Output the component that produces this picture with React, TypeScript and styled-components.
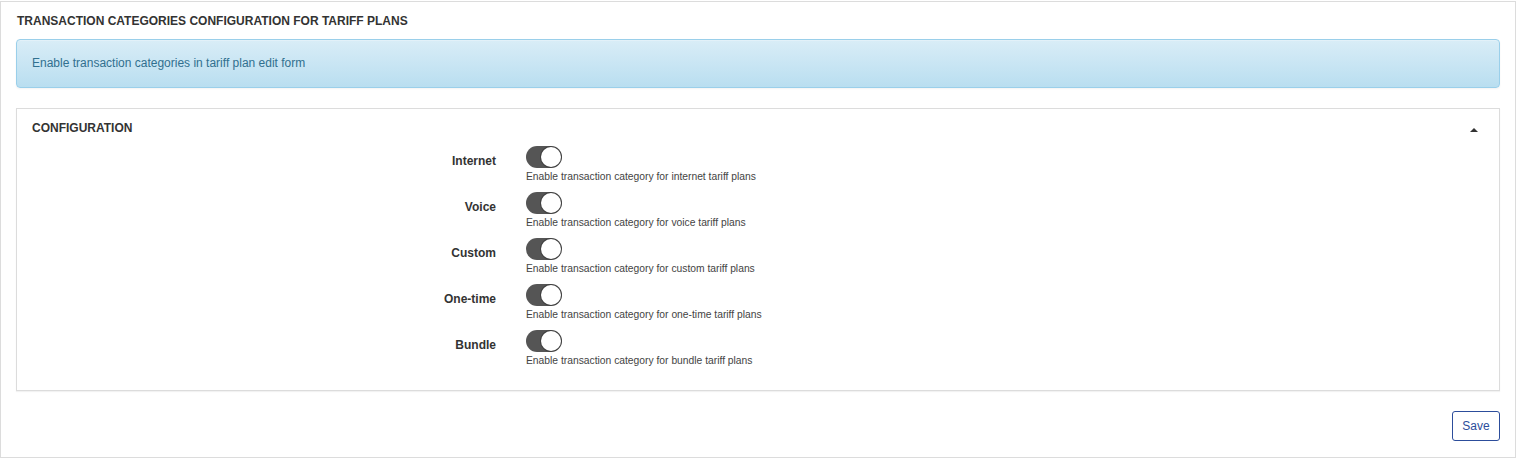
import React from "react";
import styled, { createGlobalStyle } from "styled-components";

const Global = createGlobalStyle`
  html, body { margin: 0; padding: 0; background: #fff; }
  body { font-family: "Liberation Sans", Arial, sans-serif; color: #333; font-size: 12px; }
  * { box-sizing: border-box; }
`;

const Page = styled.div`
  padding: 1px 1px 2px 0;
`;

const Outer = styled.div`
  border: 1px solid #dcdcdc;
  width: 1516px;
  height: 457px;
  padding: 0 15px;
  display: flex;
  flex-direction: column;
`;

const Title = styled.h1`
  margin: 0;
  padding: 12px 1px 0;
  height: 37px;
  font-size: 12px;
  font-weight: bold;
  text-transform: uppercase;
  color: #333;
  line-height: 14px;
`;

const Alert = styled.div`
  height: 49px;
  border: 1px solid #9acfea;
  border-radius: 4px;
  background: linear-gradient(to bottom, #d9edf7 0%, #b9def0 100%);
  box-shadow: inset 0 1px 0 rgba(255,255,255,.25), 0 1px 2px rgba(0,0,0,.05);
  color: #31708f;
  padding: 16px 15px 0;
  line-height: 14px;
  font-size: 12px;
`;

const Panel = styled.div`
  margin-top: 20px;
  border: 1px solid #dcdcdc;
  box-shadow: 0 1px 1px rgba(0,0,0,.05);
  height: 283px;
`;

const PanelHeader = styled.div`
  display: flex;
  justify-content: space-between;
  align-items: center;
  padding: 0 15px 0;
  height: 37px;
  font-weight: bold;
  line-height: 14px;
  color: #333;
`;

const Caret = styled.span`
  width: 0;
  height: 0;
  border-left: 4px solid transparent;
  border-right: 4px solid transparent;
  border-bottom: 4px solid #333;
  margin-right: 6px;
  margin-top: 4px;
`;

const Body = styled.div`
  display: flex;
  flex-direction: column;
`;

const Row = styled.div`
  display: grid;
  grid-template-columns: 33.333% 1fr;
  height: 46px;
`;

const Label = styled.label`
  text-align: right;
  padding-right: 15px;
  padding-top: 8px;
  font-weight: bold;
  line-height: 14px;
`;

const Control = styled.div`
  padding-left: 15px;
  display: flex;
  flex-direction: column;
  align-items: flex-start;
`;

const Switch = styled.span`
  position: relative;
  display: inline-block;
  width: 36px;
  height: 22px;
  border-radius: 11px;
  background: #555;
`;

const Knob = styled.span`
  position: absolute;
  right: 1px;
  top: 1px;
  width: 20px;
  height: 20px;
  border-radius: 50%;
  background: #fff;
  box-shadow: 0 0 0 1px rgba(0,0,0,.25);
`;

const Help = styled.div`
  margin-top: 2px;
  font-size: 10.3px;
  line-height: 14px;
  color: #444;
`;

const Footer = styled.div`
  display: flex;
  justify-content: flex-end;
  padding-top: 20px;
`;

const SaveButton = styled.button`
  width: 48px;
  height: 30px;
  border: 1px solid #2c4d9b;
  border-radius: 3px;
  background: #fff;
  color: #2c4d9b;
  font-family: "Liberation Sans", Arial, sans-serif;
  font-size: 12px;
  padding: 0;
  cursor: pointer;
`;

const rows = [
  { label: "Internet", key: "internet" },
  { label: "Voice", key: "voice" },
  { label: "Custom", key: "custom" },
  { label: "One-time", key: "one-time" },
  { label: "Bundle", key: "bundle" },
];

export default function App() {
  return (
    <>
      <Global />
      <Page>
        <Outer>
          <Title>Transaction categories configuration for tariff plans</Title>
          <Alert>Enable transaction categories in tariff plan edit form</Alert>
          <Panel>
            <PanelHeader>
              <span>CONFIGURATION</span>
              <Caret />
            </PanelHeader>
            <Body>
              {rows.map((r) => (
                <Row key={r.key}>
                  <Label>{r.label}</Label>
                  <Control>
                    <Switch>
                      <Knob />
                    </Switch>
                    <Help>Enable transaction category for {r.key} tariff plans</Help>
                  </Control>
                </Row>
              ))}
            </Body>
          </Panel>
          <Footer>
            <SaveButton>Save</SaveButton>
          </Footer>
        </Outer>
      </Page>
    </>
  );
}
